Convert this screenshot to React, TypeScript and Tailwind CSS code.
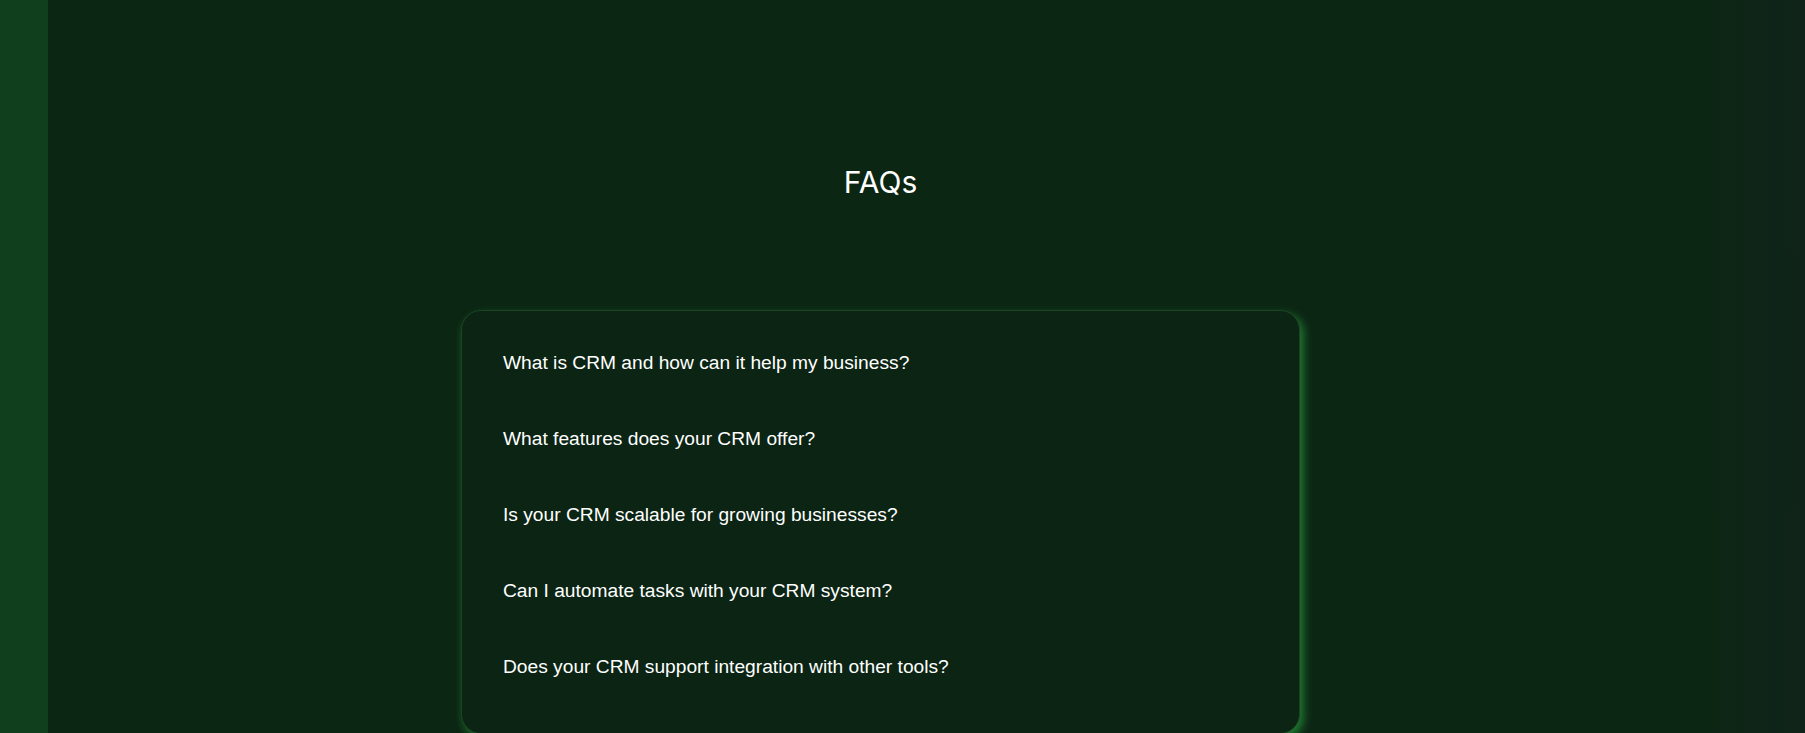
import React from 'react';

const faqs = [
  'What is CRM and how can it help my business?',
  'What features does your CRM offer?',
  'Is your CRM scalable for growing businesses?',
  'Can I automate tasks with your CRM system?',
  'Does your CRM support integration with other tools?',
];

export default function App() {
  return (
    <div className="flex min-h-[733px] w-full bg-[#0c2614]">
      {/* left rail */}
      <div className="w-[48px] shrink-0 bg-[#0f3f1d]" />

      {/* main section */}
      <main className="flex flex-1 flex-col items-center">
        <h2 className="mt-[160px] text-[30px] leading-[44px] text-white font-['Inter',sans-serif] font-normal">
          FAQs
        </h2>

        <div className="mt-[106px] w-[839px] rounded-[20px] border border-[#1c4424] bg-[#0b2413] pt-[14px] pb-[28px] shadow-[4px_4px_8px_rgba(40,150,60,0.7),-3px_4px_6px_rgba(40,150,60,0.12)]">
          {faqs.map((q) => (
            <div
              key={q}
              className="flex h-[76px] items-center pl-[41px] text-[19.2px] text-white font-['Liberation_Sans',Arial,sans-serif]"
            >
              {q}
            </div>
          ))}
        </div>
      </main>

      {/* right edge fade */}
      <div className="w-[92px] shrink-0 bg-gradient-to-r from-[#0c2614] to-[#10231a]" />
    </div>
  );
}
